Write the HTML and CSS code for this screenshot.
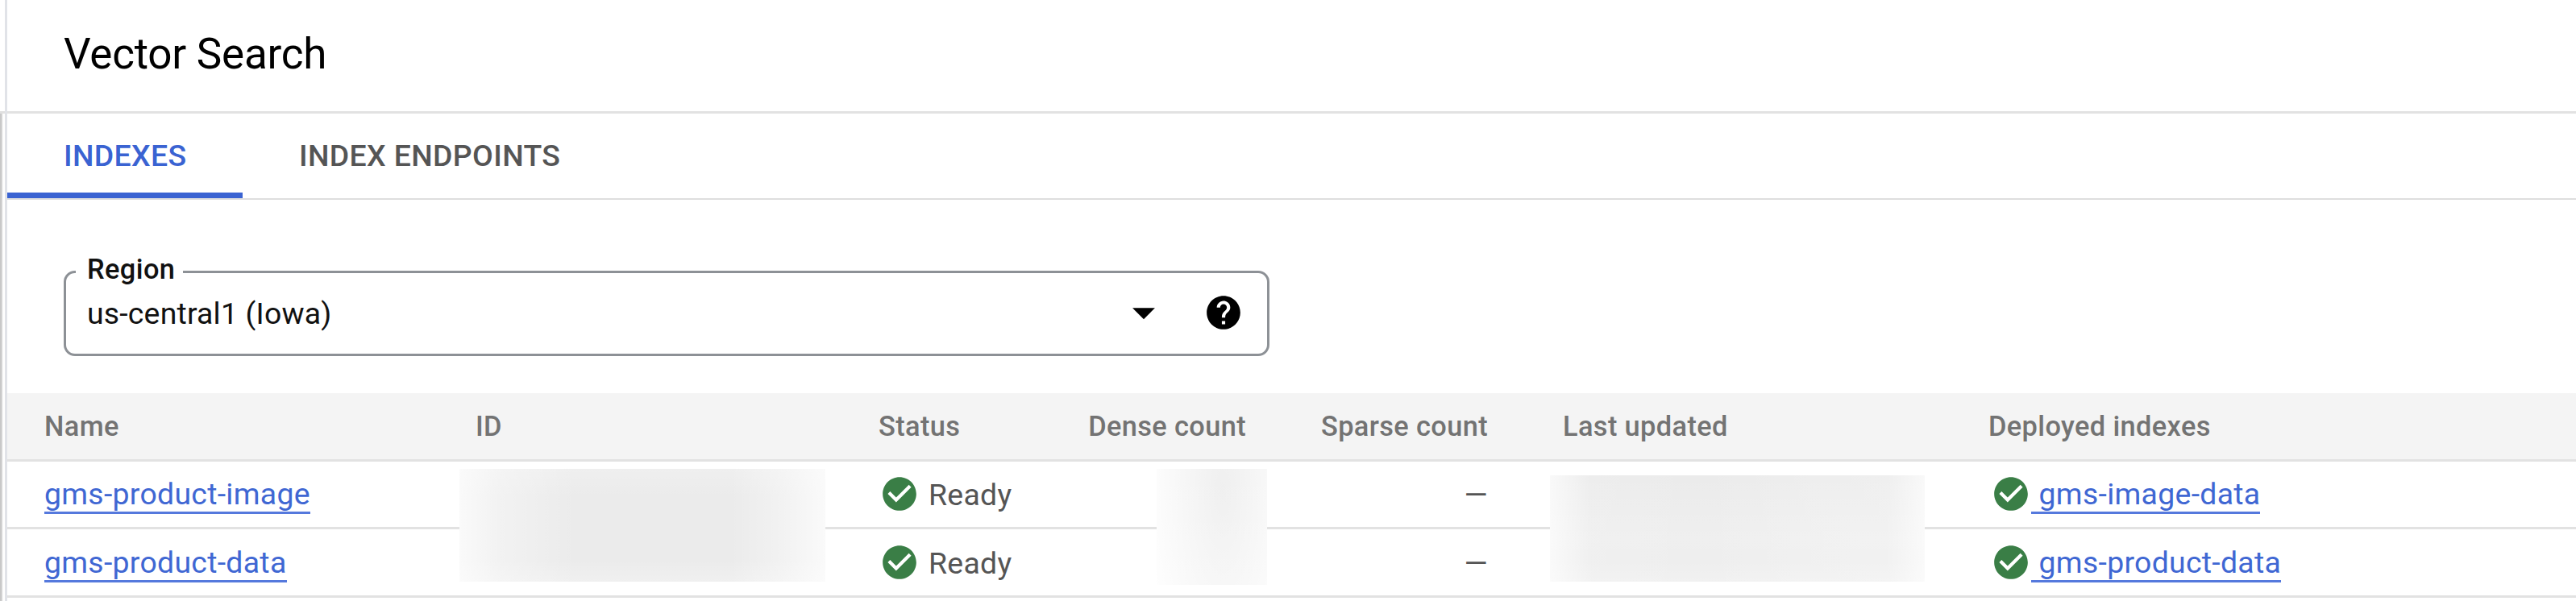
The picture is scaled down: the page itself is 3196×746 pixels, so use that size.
FILE: index.html
```
<!DOCTYPE html>
<html lang="en">
<head>
<meta charset="utf-8">
<title>Vector Search</title>
<link rel="stylesheet" href="styles.css">
</head>
<body>
<svg class="defs" aria-hidden="true">
  <symbol id="check" viewBox="0 0 24 24"><path d="M12 2C6.48 2 2 6.48 2 12s4.48 10 10 10 10-4.48 10-10S17.52 2 12 2zm-2 15l-5-5 1.41-1.41L10 14.17l7.59-7.59L19 8l-9 9z"/></symbol>
</svg>
<div class="app">
  <div class="rail"><div class="rail-shadow"></div></div>
  <main class="main">
    <header class="header"><h1 class="title">Vector Search</h1></header>
    <nav class="tabs">
      <a class="tab tab-active">INDEXES</a>
      <a class="tab">INDEX ENDPOINTS</a>
    </nav>
    <section class="filters">
      <div class="select">
        <span class="select-label">Region</span>
        <span class="select-value">us-central1 (Iowa)</span>
        <svg class="icon" viewBox="0 0 24 24"><path d="M5.3 9.2h13.4L12 16z"/></svg>
        <svg class="icon" viewBox="0 0 24 24"><path d="M12 2C6.48 2 2 6.48 2 12s4.48 10 10 10 10-4.48 10-10S17.52 2 12 2zm1 17h-2v-2h2v2zm2.07-7.75l-.9.92C13.45 12.9 13 13.5 13 15h-2v-.5c0-1.1.45-2.1 1.17-2.83l1.24-1.26c.37-.36.59-.86.59-1.41 0-1.1-.9-2-2-2s-2 .9-2 2H8c0-2.21 1.79-4 4-4s4 1.79 4 4c0 .88-.36 1.68-.93 2.25z"/></svg>
      </div>
    </section>
    <section class="table">
      <div class="row row-head">
        <span class="cell name">Name</span><span class="cell">ID</span><span class="cell">Status</span><span class="cell num">Dense count</span><span class="cell num">Sparse count</span><span class="cell updated">Last updated</span><span class="cell">Deployed indexes</span>
      </div>
      <div class="row">
        <span class="cell name"><a class="link">gms-product-image</a></span><span class="cell"></span><span class="cell"><svg class="icon status" viewBox="0 0 24 24"><use href="#check"/></svg><span class="ready">Ready</span></span><span class="cell"></span><span class="cell num">—</span><span class="cell"></span><span class="cell deployed"><svg class="icon status" viewBox="0 0 24 24"><use href="#check"/></svg><a class="link">&nbsp;gms-image-data</a></span>
      </div>
      <div class="row">
        <span class="cell name"><a class="link">gms-product-data</a></span><span class="cell"></span><span class="cell"><svg class="icon status" viewBox="0 0 24 24"><use href="#check"/></svg><span class="ready">Ready</span></span><span class="cell"></span><span class="cell num">—</span><span class="cell"></span><span class="cell deployed"><svg class="icon status" viewBox="0 0 24 24"><use href="#check"/></svg><a class="link">&nbsp;gms-product-data</a></span>
      </div>
      <div class="redacted redacted-id"></div>
      <div class="redacted redacted-dense"></div>
      <div class="redacted redacted-updated"></div>
    </section>
  </main>
</div>
</body>
</html>
```
FILE: styles.css
```
* { box-sizing: border-box; }
body { margin: 0; background: #fff; font-family: Roboto, sans-serif; font-size: 37.4px; letter-spacing: .29px; color: #555; overflow: hidden; }
.defs { position: absolute; width: 0; height: 0; }
.app { display: flex; height: 746px; overflow: hidden; }
.rail { flex: none; width: 9px; border-right: 3px solid #e1e3e8; padding-top: 138px; }
.rail-shadow { height: 608px; border-top: 3px solid #e0e0e0; background: linear-gradient(90deg, #c8c8c8 0 2px, #e2e2e2 2px 3px, #f4f4f4 3px 4px, #fff 4px); }
.main { flex: 1; min-width: 0; }
.header { height: 141px; border-bottom: 3px solid #e2e2e2; display: flex; align-items: center; padding: 0 0 5px 70px; }
.title { margin: 0; font-size: 53px; font-weight: 400; letter-spacing: -.25px; line-height: 62px; color: #000; }
.tabs { height: 107px; display: flex; border-bottom: 2px solid #dedede; font-weight: 500; letter-spacing: .36px; }
.tab { display: flex; align-items: center; padding: 5px 70px 0 70px; border-bottom: 7px solid transparent; }
.tab-active { color: #3a63d2; border-bottom-color: #3a63d2; width: 292px; padding-right: 0; }
.filters { height: 240px; padding: 88px 0 0 70px; }
.select { position: relative; width: 1496px; height: 106px; border: 3px solid #8d9196; border-radius: 14px; display: flex; align-items: center; padding: 0 29px 2px 26px; color: #111; }
.select-label { position: absolute; left: 12px; top: -25px; padding: 0 10px 0 14px; height: 40px; line-height: 40px; font-size: 34.4px; font-weight: 500; letter-spacing: .4px; background: #fff; }
.select-value { flex: 1; line-height: 44px; padding-top: 2px; letter-spacing: .2px; }
.icon { width: 50px; height: 50px; flex: none; fill: #000; }
.select .icon + .icon { margin-left: 49px; }
.table { position: relative; }
.row { display: grid; grid-template-columns: 581px 500px 258px 198px 300px 621px 1fr; height: 84.67px; border-bottom: 3px solid #e2e2e2; }
.row-head { background: #f4f4f4; color: #737373; font-size: 34.4px; font-weight: 500; letter-spacing: .36px; }
.cell { display: flex; align-items: center; white-space: nowrap; }
.name { padding-left: 46px; }
.num { justify-content: flex-end; }
.updated { padding-left: 93px; }
.row .icon { fill: #3a7e46; margin-left: 1px; }
.ready { margin-left: 11px; }
.deployed { padding-left: 2px; }
.link { color: #3f67d3; height: 46px; line-height: 43px; border-bottom: 3px solid #5579dd; margin-top: 4px; }
.row:not(.row-head) .num, .ready { padding-top: 1px; }
.redacted { position: absolute; }
.redacted-id, .redacted-dense, .redacted-updated { background-color: #ebebeb; }
.redacted-id { left: 561px; top: 94px; width: 454px; height: 140px; background-image: linear-gradient(90deg, rgba(255,255,255,.75), rgba(255,255,255,.35) 11%, rgba(255,255,255,0) 32%, rgba(255,255,255,0) 74%, rgba(255,255,255,.35) 88%, rgba(255,255,255,.75)), linear-gradient(180deg, rgba(255,255,255,.2), transparent 25%, transparent 80%, rgba(255,255,255,.25)); }
.redacted-dense { left: 1426px; top: 94px; width: 137px; height: 144px; background-color: #efefef; background-image: radial-gradient(ellipse 90px 260px at 60% 20%, transparent, rgba(255,255,255,.9)), linear-gradient(180deg, transparent, rgba(255,255,255,.2)); }
.redacted-updated { left: 1914px; top: 102px; width: 465px; height: 132px; background-image: linear-gradient(90deg, rgba(255,255,255,.7), rgba(255,255,255,.1) 11%, transparent 40%, rgba(255,255,255,.15) 70%, rgba(255,255,255,.2) 90%, rgba(255,255,255,.7)), linear-gradient(180deg, transparent, rgba(255,255,255,.2) 60%, rgba(255,255,255,.15) 80%, rgba(255,255,255,.3)); }
```
